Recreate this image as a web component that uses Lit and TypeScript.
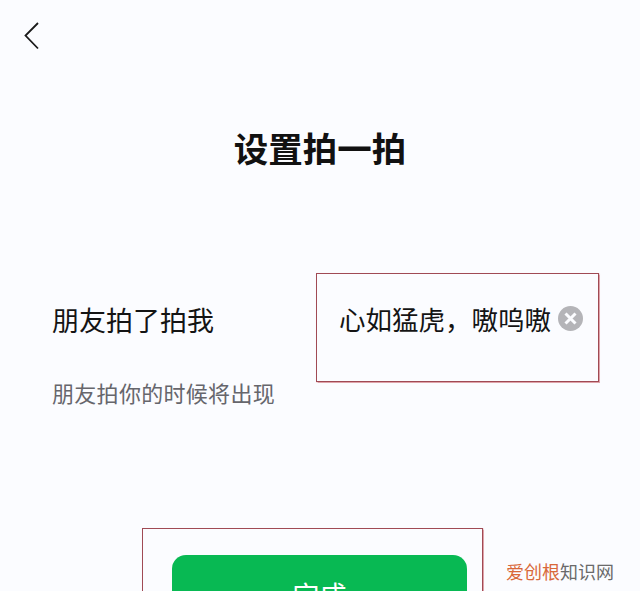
import { LitElement, html, css } from 'lit';
import { customElement } from 'lit/decorators.js';

const CJK = css`'Noto Sans CJK SC', 'Liberation Sans', sans-serif`;

@customElement('app-root')
export class AppRoot extends LitElement {
	static styles = css`
		:host {
			display: block;
			position: relative;
			width: 640px;
			height: 591px;
			overflow: hidden;
			background: #fbfcff;
			font-family: ${CJK};
			color: #141414;
		}

		.back {
			display: block;
			margin: 22px 0 0 23px;
		}

		.title {
			margin: 72px 0 0;
			font-size: 34.5px;
			line-height: 50px;
			font-weight: 700;
			text-align: center;
			color: #111;
		}

		.row {
			display: flex;
			align-items: flex-start;
			justify-content: space-between;
			margin: 101px 41px 0 52px;
		}

		.label {
			margin-top: 27px;
			font-size: 27px;
			line-height: 40px;
		}

		.field {
			box-sizing: border-box;
			display: flex;
			align-items: center;
			gap: 7px;
			width: 283px;
			height: 109px;
			padding: 0 15px 18px 22px;
			border: 1px solid #a04a54;
			box-shadow: 0 0 1px 0.5px rgba(200, 90, 100, 0.55);
		}

		.value {
			font-size: 26.5px;
			line-height: 40px;
			white-space: nowrap;
		}

		.hint {
			margin: -8px 0 0 52px;
			font-size: 22px;
			letter-spacing: 0.3px;
			line-height: 36px;
			color: #66666c;
		}

		.action {
			box-sizing: border-box;
			width: 341px;
			height: 120px;
			margin: 118px 0 0 142px;
			padding: 26px 15px 0 29px;
			border: 1px solid #a04a54;
			box-shadow: 0 0 1px 0.5px rgba(200, 90, 100, 0.55);
		}

		.done {
			display: flex;
			justify-content: center;
			padding-top: 16px;
			height: 80px;
			border-radius: 14px;
			background: #08b953;
			color: #fff;
			font-size: 27px;
			line-height: 48px;
		}

		.mark {
			position: absolute;
			right: 26px;
			bottom: 7px;
			font-size: 18px;
			line-height: 26px;
			color: #6a6a6a;
		}

		.mark b {
			font-weight: 400;
			color: #d9683a;
		}
	`;

	render() {
		return html`
			<svg class="back" width="18" height="28" viewBox="0 0 18 28" fill="none">
				<path d="M15 1 L2.5 13.5 L15 26.5" stroke="#1a1a1a" stroke-width="1.8" />
			</svg>
			<h1 class="title">设置拍一拍</h1>
			<div class="row">
				<div class="label">朋友拍了拍我</div>
				<div class="field">
					<span class="value">心如猛虎，嗷呜嗷</span>
					<svg width="25" height="25" viewBox="0 0 25 25">
						<circle cx="12.5" cy="12.5" r="12.5" fill="#b4b4b8" />
						<path d="M7.5 7.5 L17.5 17.5 M17.5 7.5 L7.5 17.5" stroke="#fbfcff" stroke-width="3" />
					</svg>
				</div>
			</div>
			<div class="hint">朋友拍你的时候将出现</div>
			<div class="action">
				<div class="done">完成</div>
			</div>
			<div class="mark"><b>爱创根</b>知识网</div>
		`;
	}
}

declare global {
	interface HTMLElementTagNameMap {
		'app-root': AppRoot;
	}
}
